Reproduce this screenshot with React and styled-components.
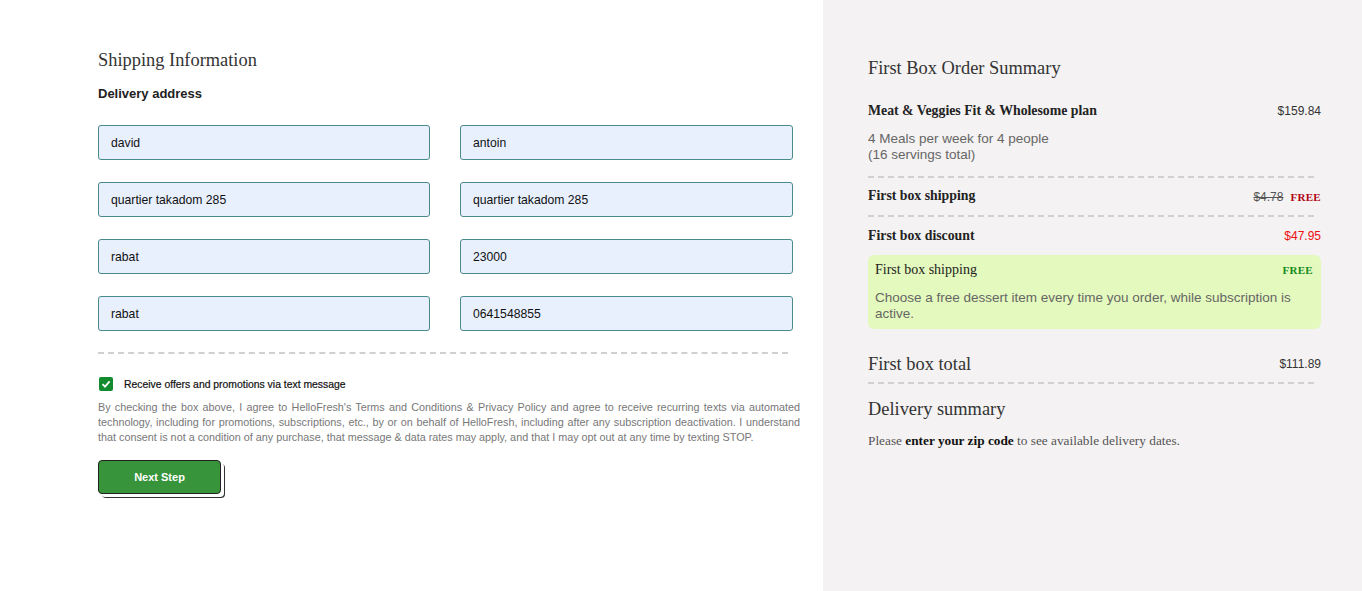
import React from "react";
import styled, { createGlobalStyle } from "styled-components";

const GlobalStyle = createGlobalStyle`
  html, body {
    margin: 0;
    padding: 0;
    background: #ffffff;
  }
  * { box-sizing: border-box; }
`;

const Page = styled.div`
  display: flex;
  width: 1362px;
  min-height: 591px;
`;

const LeftCol = styled.section`
  width: 823px;
  padding: 49px 0 0 98px;
  background: #ffffff;
`;

const Title = styled.h1`
  margin: 0;
  font-family: "Liberation Serif", "Times New Roman", serif;
  font-weight: normal;
  font-size: 18.4px;
  line-height: 22px;
  color: #333;
`;

const SubTitle = styled.h2`
  margin: 15px 0 0;
  font-family: "Liberation Sans", Arial, sans-serif;
  font-size: 13px;
  line-height: 16px;
  font-weight: bold;
  color: #222;
`;

const FieldGrid = styled.div`
  display: grid;
  grid-template-columns: 332px 333px;
  column-gap: 30px;
  row-gap: 22px;
  margin-top: 23px;
  width: 695px;
`;

const Field = styled.input`
  height: 35px;
  width: 100%;
  padding: 0 12px;
  border: 1px solid #4a8a8a;
  border-radius: 3px;
  background: #e8f0fe;
  font-family: "Liberation Sans", Arial, sans-serif;
  font-size: 12.2px;
  color: #111;
  outline: none;
`;

const Divider = styled.hr`
  margin: ${(p) => p.$top || 0}px 0 0;
  width: ${(p) => p.$width || "100%"};
  border: none;
  border-top: 2px dashed #d0d0d0;
  height: 0;
`;

const CheckRow = styled.label`
  display: flex;
  align-items: center;
  gap: 11px;
  margin-top: 23px;
  height: 14px;
  font-family: "Liberation Sans", Arial, sans-serif;
  font-size: 10.4px;
  color: #111;
  -webkit-text-stroke: 0.2px #111;
`;

const CheckBox = styled.span`
  width: 14px;
  height: 14px;
  border-radius: 2px;
  background: #128a2e;
  display: flex;
  align-items: center;
  justify-content: center;
  margin-left: 1px;
`;

const Legal = styled.p`
  margin: 9px 0 0;
  width: 702px;
  font-family: "Liberation Sans", Arial, sans-serif;
  font-size: 10.8px;
  line-height: 15px;
  color: #777;
  text-align: justify;
`;

const ButtonWrap = styled.div`
  margin-top: 15px;
`;

const NextButton = styled.button`
  width: 123px;
  height: 34px;
  background: #38943a;
  border: 1px solid #222;
  border-radius: 4px;
  color: #fff;
  font-family: "Liberation Sans", Arial, sans-serif;
  font-size: 11px;
  font-weight: bold;
  cursor: pointer;
  box-shadow: 3px 3px 0 0 #fff, 4px 4px 0 0 #333;
`;

const RightCol = styled.aside`
  flex: 1;
  background: #f4f2f2;
  padding: 57px 41px 0 45px;
`;

const SummaryTitle = styled.h2`
  margin: ${(p) => p.$top || 0}px 0 0;
  font-family: "Liberation Serif", "Times New Roman", serif;
  font-weight: normal;
  font-size: 18.4px;
  line-height: 22px;
  color: #333;
`;

const Row = styled.div`
  display: flex;
  justify-content: space-between;
  align-items: center;
  margin-top: ${(p) => p.$top || 0}px;
  min-height: ${(p) => p.$h || 18}px;
`;

const ItemName = styled.span`
  font-family: "Liberation Serif", "Times New Roman", serif;
  font-size: ${(p) => (p.$plain ? "14px" : "13.8px")};
  font-weight: ${(p) => (p.$plain ? "normal" : "bold")};
  color: #222;
`;

const Price = styled.span`
  font-family: "Liberation Sans", Arial, sans-serif;
  font-size: 12px;
  color: ${(p) => p.$color || "#333"};
  text-decoration: ${(p) => (p.$strike ? "line-through" : "none")};
`;

const FreeTag = styled.span`
  font-family: "Liberation Serif", "Times New Roman", serif;
  font-size: 11px;
  font-weight: bold;
  letter-spacing: 0.3px;
  color: ${(p) => p.$color};
  margin-left: ${(p) => p.$gap || 0}px;
`;

const Note = styled.p`
  margin: ${(p) => p.$top || 0}px 0 0;
  font-family: "Liberation Sans", Arial, sans-serif;
  font-size: 13.5px;
  line-height: 16px;
  color: #666;
`;

const PromoBox = styled.div`
  margin-top: 10px;
  background: #e4f9bd;
  border-radius: 6px;
  padding: 6px 8px 7px 7px;
`;

const DeliveryText = styled.p`
  margin: 13px 0 0;
  font-family: "Liberation Serif", "Times New Roman", serif;
  font-size: 13.3px;
  line-height: 16px;
  color: #555;

  b {
    color: #111;
  }
`;

const fields = [
  "david",
  "antoin",
  "quartier takadom 285",
  "quartier takadom 285",
  "rabat",
  "23000",
  "rabat",
  "0641548855",
];

const App = () => {
  return (
    <>
      <GlobalStyle />
      <Page>
        <LeftCol>
          <Title>Shipping Information</Title>
          <SubTitle>Delivery address</SubTitle>
          <FieldGrid>
            {fields.map((v, i) => (
              <Field key={i} defaultValue={v} />
            ))}
          </FieldGrid>
          <Divider $top={21} $width="690px" />
          <CheckRow>
            <CheckBox>
              <svg width="10" height="10" viewBox="0 0 10 10">
                <path d="M1.5 5.2 L4 7.6 L8.6 2.4" fill="none" stroke="#fff" strokeWidth="1.8" />
              </svg>
            </CheckBox>
            Receive offers and promotions via text message
          </CheckRow>
          <Legal>
            By checking the box above, I agree to HelloFresh's Terms and Conditions &amp; Privacy Policy and
            agree to receive recurring texts via automated technology, including for promotions, subscriptions,
            etc., by or on behalf of HelloFresh, including after any subscription deactivation. I understand that
            consent is not a condition of any purchase, that message &amp; data rates may apply, and that I may opt
            out at any time by texting STOP.
          </Legal>
          <ButtonWrap>
            <NextButton>Next Step</NextButton>
          </ButtonWrap>
        </LeftCol>

        <RightCol>
          <SummaryTitle>First Box Order Summary</SummaryTitle>
          <Row $top={23}>
            <ItemName>Meat &amp; Veggies Fit &amp; Wholesome plan</ItemName>
            <Price>$159.84</Price>
          </Row>
          <Note $top={11}>
            4 Meals per week for 4 people
            <br />
            (16 servings total)
          </Note>
          <Divider $top={13} $width="446px" />
          <Row $top={9}>
            <ItemName>First box shipping</ItemName>
            <span>
              <Price $strike $color="#555">$4.78</Price>
              <FreeTag $color="#b0000f" $gap={7}>FREE</FreeTag>
            </span>
          </Row>
          <Divider $top={10} $width="446px" />
          <Row $top={10}>
            <ItemName>First box discount</ItemName>
            <Price $color="#ee1111">$47.95</Price>
          </Row>
          <PromoBox>
            <Row>
              <ItemName $plain>First box shipping</ItemName>
              <FreeTag $color="#138a20">FREE</FreeTag>
            </Row>
            <Note $top={11}>
              Choose a free dessert item every time you order, while subscription is active.
            </Note>
          </PromoBox>
          <Row $top={24} $h={22}>
            <SummaryTitle as="span">First box total</SummaryTitle>
            <Price>$111.89</Price>
          </Row>
          <Divider $top={7} $width="446px" />
          <SummaryTitle $top={14}>Delivery summary</SummaryTitle>
          <DeliveryText>
            Please <b>enter your zip code</b> to see available delivery dates.
          </DeliveryText>
        </RightCol>
      </Page>
    </>
  );
};

export default App;
